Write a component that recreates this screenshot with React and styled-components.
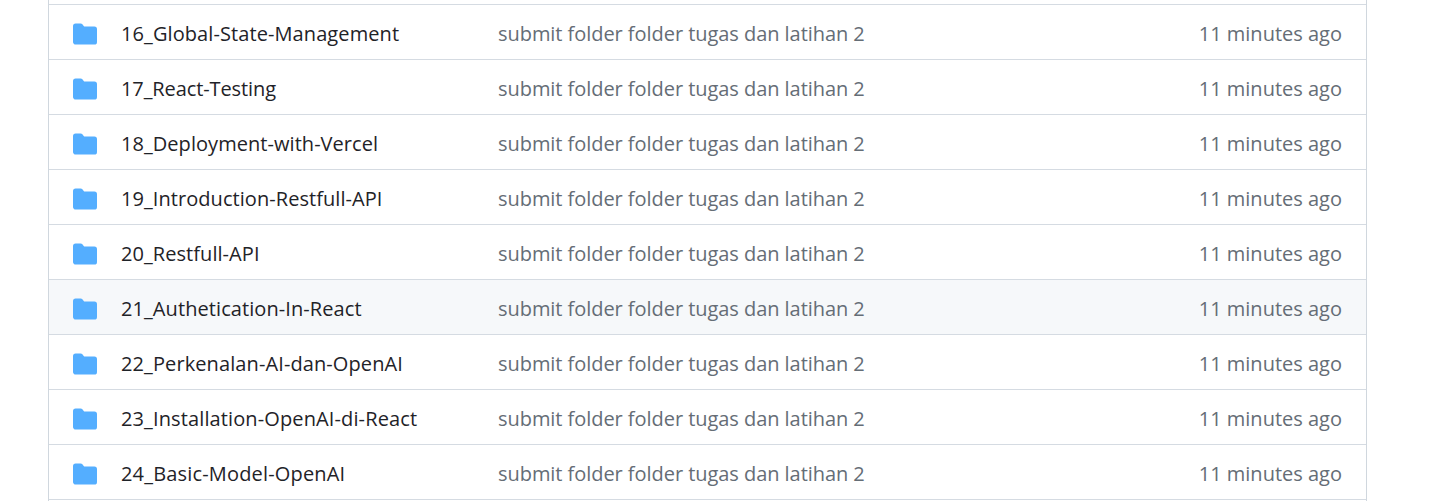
import React from 'react';
import styled, { createGlobalStyle } from 'styled-components';

const GlobalStyle = createGlobalStyle`
  * { box-sizing: border-box; }
  body { margin: 0; background: #fff; overflow: hidden; }
`;

const Viewport = styled.main`
  height: 501px;
  overflow: hidden;
  padding: 0 73px 0 48px;
  font-family: 'Open Sans', 'Noto Sans', sans-serif;
`;

const FileList = styled.div`
  border: 1px solid #d0d7de;
  border-top: 0;
  padding-top: 4px;
  height: 560px;
`;

const Row = styled.div`
  display: flex;
  align-items: center;
  height: 55px;
  padding: 4px 24px 0;
  border-top: 1px solid #d5dbe2;
  background: ${({ $active }) => ($active ? '#f6f8fa' : '#fff')};
  font-size: 20px;
  line-height: 30px;
  white-space: nowrap;
`;

const FolderIcon = styled.svg`
  flex: none;
  width: 24px;
  height: 24px;
  margin-right: 24px;
  fill: #54aeff;
`;

const Cell = styled.div`
  flex: none;
  width: ${({ $width }) => $width}px;
`;

const Label = styled.span`
  display: block;
  color: ${({ $muted }) => ($muted ? '#656d76' : '#1f2328')};
  letter-spacing: ${({ $tracking = 0 }) => $tracking}px;
`;

const Time = styled(Cell)`
  margin-left: auto;
  text-align: right;
`;

const folders = [
  { name: '16_Global-State-Management', tracking: 0.09 },
  { name: '17_React-Testing', tracking: -0.1 },
  { name: '18_Deployment-with-Vercel', tracking: 0.05 },
  { name: '19_Introduction-Restfull-API', tracking: 0.06 },
  { name: '20_Restfull-API', tracking: 0.06 },
  { name: '21_Authetication-In-React', tracking: 0.08 },
  { name: '22_Perkenalan-AI-dan-OpenAI', tracking: 0.1 },
  { name: '23_Installation-OpenAI-di-React', tracking: 0.12 },
  { name: '24_Basic-Model-OpenAI', tracking: 0.17 },
];

export default function App() {
  return (
    <Viewport>
      <GlobalStyle />
      <FileList>
        {folders.map(({ name, tracking }) => (
          <Row key={name} $active={name.startsWith('21')}>
            <FolderIcon viewBox="0 0 16 16" aria-hidden="true">
              <path d="M1.75 1A1.75 1.75 0 0 0 0 2.75v10.5C0 14.216.784 15 1.75 15h12.5A1.75 1.75 0 0 0 16 13.25v-8.5A1.75 1.75 0 0 0 14.25 3H7.5a.25.25 0 0 1-.2-.1l-.9-1.2C6.07 1.26 5.55 1 5 1H1.75Z" />
            </FolderIcon>
            <Cell $width={377}><Label $tracking={tracking}>{name}</Label></Cell>
            <Cell $width={400}><Label $muted $tracking={-0.05}>submit folder folder tugas dan latihan 2</Label></Cell>
            <Time $width={160}><Label $muted>11 minutes ago</Label></Time>
          </Row>
        ))}
        <Row />
      </FileList>
    </Viewport>
  );
}
